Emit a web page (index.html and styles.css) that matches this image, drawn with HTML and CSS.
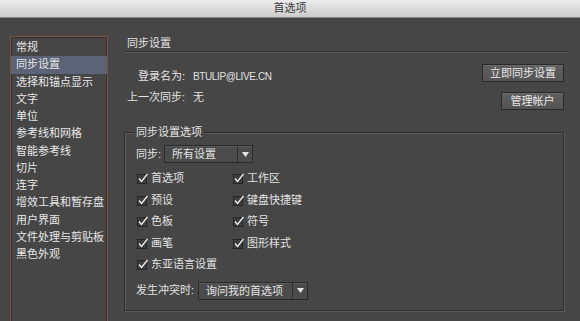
FILE: index.html
```html
<!DOCTYPE html>
<html lang="zh-CN">
<head>
  <meta charset="UTF-8">
  <title>首选项</title>
  <link rel="stylesheet" href="styles.css">
</head>
<body>
  <div class="titlebar">首选项</div>
  <div class="main">
    <ul class="sidebar">
      <li>常规</li>
      <li class="on">同步设置</li>
      <li>选择和锚点显示</li>
      <li>文字</li>
      <li>单位</li>
      <li>参考线和网格</li>
      <li>智能参考线</li>
      <li>切片</li>
      <li>连字</li>
      <li>增效工具和暂存盘</li>
      <li>用户界面</li>
      <li>文件处理与剪贴板</li>
      <li>黑色外观</li>
    </ul>
    <div class="content">
      <h2 class="heading">同步设置</h2>
      <div class="account">
        <dl class="info">
          <dt>登录名为:</dt><dd class="email">BTULIP@LIVE.CN</dd>
          <dt>上一次同步:</dt><dd>无</dd>
        </dl>
        <div class="actions">
          <button class="btn">立即同步设置</button>
          <button class="btn">管理帐户</button>
        </div>
      </div>
      <fieldset class="group">
        <legend>同步设置选项</legend>
        <div class="field">
          <span>同步:</span>
          <span class="select">
            <span class="select-text">所有设置</span>
            <span class="select-arrow"><svg width="7" height="5" viewBox="0 0 7 5"><path d="M0 0H7L3.5 5Z" fill="#e6e6e6"/></svg></span>
          </span>
        </div>
        <div class="checks">
          <label class="check"><svg width="12" height="11" viewBox="0 0 12 11"><rect x="0.5" y="1.5" width="9" height="9" fill="#3d3d3d" stroke="#262626"/><path d="M2 5.5L4.5 8.5L10.5 1" fill="none" stroke="#ececec" stroke-width="1.4"/></svg>首选项</label>
          <label class="check"><svg width="12" height="11" viewBox="0 0 12 11"><rect x="0.5" y="1.5" width="9" height="9" fill="#3d3d3d" stroke="#262626"/><path d="M2 5.5L4.5 8.5L10.5 1" fill="none" stroke="#ececec" stroke-width="1.4"/></svg>工作区</label>
          <label class="check"><svg width="12" height="11" viewBox="0 0 12 11"><rect x="0.5" y="1.5" width="9" height="9" fill="#3d3d3d" stroke="#262626"/><path d="M2 5.5L4.5 8.5L10.5 1" fill="none" stroke="#ececec" stroke-width="1.4"/></svg>预设</label>
          <label class="check"><svg width="12" height="11" viewBox="0 0 12 11"><rect x="0.5" y="1.5" width="9" height="9" fill="#3d3d3d" stroke="#262626"/><path d="M2 5.5L4.5 8.5L10.5 1" fill="none" stroke="#ececec" stroke-width="1.4"/></svg>键盘快捷键</label>
          <label class="check"><svg width="12" height="11" viewBox="0 0 12 11"><rect x="0.5" y="1.5" width="9" height="9" fill="#3d3d3d" stroke="#262626"/><path d="M2 5.5L4.5 8.5L10.5 1" fill="none" stroke="#ececec" stroke-width="1.4"/></svg>色板</label>
          <label class="check"><svg width="12" height="11" viewBox="0 0 12 11"><rect x="0.5" y="1.5" width="9" height="9" fill="#3d3d3d" stroke="#262626"/><path d="M2 5.5L4.5 8.5L10.5 1" fill="none" stroke="#ececec" stroke-width="1.4"/></svg>符号</label>
          <label class="check"><svg width="12" height="11" viewBox="0 0 12 11"><rect x="0.5" y="1.5" width="9" height="9" fill="#3d3d3d" stroke="#262626"/><path d="M2 5.5L4.5 8.5L10.5 1" fill="none" stroke="#ececec" stroke-width="1.4"/></svg>画笔</label>
          <label class="check"><svg width="12" height="11" viewBox="0 0 12 11"><rect x="0.5" y="1.5" width="9" height="9" fill="#3d3d3d" stroke="#262626"/><path d="M2 5.5L4.5 8.5L10.5 1" fill="none" stroke="#ececec" stroke-width="1.4"/></svg>图形样式</label>
          <label class="check"><svg width="12" height="11" viewBox="0 0 12 11"><rect x="0.5" y="1.5" width="9" height="9" fill="#3d3d3d" stroke="#262626"/><path d="M2 5.5L4.5 8.5L10.5 1" fill="none" stroke="#ececec" stroke-width="1.4"/></svg>东亚语言设置</label>
        </div>
        <div class="field conflict">
          <span>发生冲突时:</span>
          <span class="select wide">
            <span class="select-text">询问我的首选项</span>
            <span class="select-arrow"><svg width="7" height="5" viewBox="0 0 7 5"><path d="M0 0H7L3.5 5Z" fill="#e6e6e6"/></svg></span>
          </span>
        </div>
      </fieldset>
    </div>
  </div>
</body>
</html>
```

FILE: styles.css
```css
* {margin: 0; padding: 0; box-sizing: border-box;}
body {
  width: 580px;
  height: 321px;
  overflow: hidden;
  background: #464646;
  color: #e2e2e2;
  font-family: "Liberation Sans", "Noto Sans CJK SC", sans-serif;
  font-size: 11px;
  line-height: 1;
}
.titlebar {
  height: 18px;
  line-height: 17px;
  text-align: center;
  color: #3a3a3a;
  background: linear-gradient(#ededed, #cbcbcb);
  border-bottom: 1px solid #8a8a8a;
}
.main {
  display: flex;
  gap: 16px;
  padding: 18px 12px 0 10px;
}
.sidebar {
  list-style: none;
  flex: none;
  width: 98px;
  height: 295px;
  padding-top: 2px;
  border: 1px solid #7d5437;
  box-shadow: inset 0 0 0 1px #333;
}
.sidebar li {
  line-height: 17.25px;
  padding-left: 5px;
  white-space: nowrap;
  color: #e6e6e6;
}
.sidebar .on {
  background: #5b6377;
}
.content {
  flex: 1;
}
.heading {
  font-size: 11px;
  font-weight: normal;
  line-height: 15px;
  padding-left: 3px;
  border-bottom: 1px solid #303030;
  box-shadow: 0 1px 0 #595959;
}
.account {
  display: flex;
  justify-content: space-between;
  margin-top: 12px;
}
.info {
  display: grid;
  grid-template-columns: auto auto;
  column-gap: 8px;
  align-content: start;
  padding: 2px 0 0 3px;
  line-height: 21px;
}
.info dt {
  text-align: right;
}
.email {
  font-size: 10px;
  letter-spacing: -0.4px;
}
.actions {
  display: flex;
  flex-direction: column;
  align-items: flex-end;
  gap: 10px;
  padding-right: 4px;
}
.btn {
  font: inherit;
  color: #e8e8e8;
  height: 18px;
  min-width: 63px;
  padding: 0 7px;
  background: linear-gradient(#5f5f5f, #545454);
  border: 1px solid #2a2a2a;
  box-shadow: inset 0 1px 0 #6b6b6b;
}
.group {
  margin: 15px 4px 0 0;
  padding: 6px 10px 10px 11px;
  border: 1px solid #2f2f2f;
  box-shadow: inset 1px 1px 0 #5a5a5a, 1px 1px 0 #5a5a5a;
}
.group legend {
  margin-left: -2px;
  padding: 0 2px;
  line-height: 14px;
  background: #464646;
}
.field {
  display: flex;
  align-items: center;
  gap: 3px;
  height: 18px;
}
.select {
  display: flex;
  width: 89px;
  height: 18px;
  background: #4b4b4b;
  border: 1px solid #2a2a2a;
  box-shadow: inset 0 1px 0 #5b5b5b;
}
.select.wide {
  width: 110px;
}
.select-text {
  flex: 1;
  padding-left: 7px;
  line-height: 16px;
}
.select-arrow {
  width: 15px;
  display: flex;
  align-items: center;
  justify-content: center;
  border-left: 1px solid #2e2e2e;
}
.checks {
  display: grid;
  grid-template-columns: 96px 96px;
  grid-auto-rows: 21.5px;
  margin-top: 5px;
  padding-left: 1px;
}
.check {
  display: flex;
  align-items: center;
  gap: 2px;
}
.conflict {
  margin-top: 6px;
  gap: 4px;
}
```
